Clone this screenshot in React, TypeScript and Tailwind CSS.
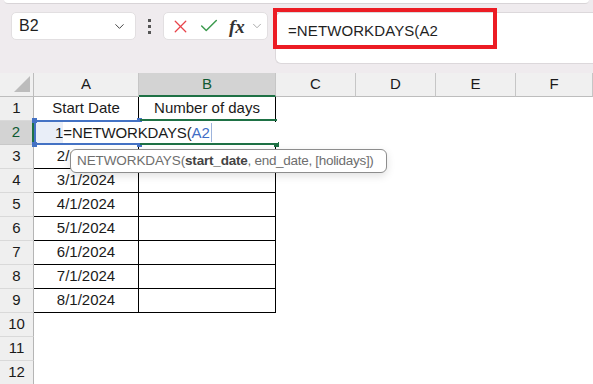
import { X, Check, ChevronDown } from 'lucide-react';

const FONT = { fontFamily: '"Liberation Sans", Arial, sans-serif' };

const columns = ['A', 'B', 'C', 'D', 'E', 'F'];

const data: Record<number, [string, string]> = {
  1: ['Start Date', 'Number of days'],
  2: ['', ''],
  3: ['2/1/2024', ''],
  4: ['3/1/2024', ''],
  5: ['4/1/2024', ''],
  6: ['5/1/2024', ''],
  7: ['6/1/2024', ''],
  8: ['7/1/2024', ''],
  9: ['8/1/2024', ''],
};

function Toolbar() {
  return (
    <div className="relative h-[73px] bg-[#efebee]">
      <div className="mx-[4px] h-[4px] rounded-b-[4px] border-b border-[#d8d4d7] bg-white" />
      <div className="mt-[8px] flex items-start pl-[11px]">
        {/* name box */}
        <div className="flex h-[28px] w-[125px] items-center justify-between rounded-[5px] border border-[#e2dfe1] bg-white pl-[7px] pr-[8px]">
          <span className="text-[16px] text-[#1f1f1f]">B2</span>
          <ChevronDown size={15} strokeWidth={1.6} className="text-[#444]" />
        </div>
        <div className="flex h-[28px] w-[27px] flex-col items-center justify-center gap-[3px]">
          <span className="h-[3px] w-[3px] bg-[#555]" />
          <span className="h-[3px] w-[3px] bg-[#555]" />
          <span className="h-[3px] w-[3px] bg-[#555]" />
        </div>
        {/* cancel / enter / fx */}
        <div className="flex h-[28px] w-[105px] items-center rounded-[5px] border border-[#e2dfe1] bg-white pl-[6px]">
          <X size={21} strokeWidth={1.5} className="text-[#e8434a]" />
          <Check size={22} strokeWidth={1.6} className="ml-[7px] text-[#3c9a4e]" />
          <span
            className="ml-[9px] text-[19px] font-bold italic leading-none text-[#333]"
            style={{ fontFamily: '"Liberation Serif", "Times New Roman", serif' }}
          >
            fx
          </span>
          <ChevronDown size={14} strokeWidth={1.4} className="ml-[5px] text-[#999]" />
        </div>
        {/* formula bar */}
        <div className="ml-[7px] h-[52px] flex-1 rounded-l-[6px] border border-r-0 border-[#dcd8db] bg-white pl-[12px] pt-[6px]">
          <span className="text-[15px] tracking-[0.1px] text-[#1f1f1f]">=NETWORKDAYS(A2</span>
        </div>
      </div>
      {/* annotation */}
      <div className="absolute left-[273px] top-[8px] h-[41px] w-[224px] border-[4px] border-[#ec1c24]" />
    </div>
  );
}

function Sheet() {
  const rows = Array.from({ length: 12 }, (_, i) => i + 1);
  return (
    <div className="relative">
      <div className="grid auto-rows-[24px] grid-cols-[34px_105px_137px_80px_80px_80px_1fr] text-[15px] text-[#1a1a1a]">
        {/* header row */}
        <div className="relative border-b border-r border-[#bdbdbd] bg-[#f0f0f0]">
          <div className="absolute bottom-[4px] right-[3px] h-0 w-0 border-b-[16px] border-l-[16px] border-b-[#bcbcbc] border-l-transparent" />
        </div>
        {columns.map((c) =>
          c === 'B' ? (
            <div
              key={c}
              className="flex items-center justify-center border-b-2 border-r border-b-[#1e7145] border-r-[#c6c6c6] bg-[#d3d3d3] text-[#0f5a32]"
            >
              {c}
            </div>
          ) : (
            <div
              key={c}
              className="flex items-center justify-center border-b border-r border-b-[#bdbdbd] border-r-[#c6c6c6] bg-[#f0f0f0]"
            >
              {c}
            </div>
          ),
        )}
        {rows.map((r) => {
          const inTable = r <= 9;
          const [a, b] = data[r] ?? ['', ''];
          const active = r === 2;
          return [
            <div
              key={`h${r}`}
              className={
                active
                  ? 'flex items-center justify-center border-b border-r-2 border-b-[#c8c8c8] border-r-[#1e7145] bg-[#d3d3d3] text-[#0f5a32]'
                  : 'flex items-center justify-center border-b border-r border-b-[#d9d9d9] border-r-[#b5b5b5] bg-[#efefef]'
              }
            >
              {r}
            </div>,
            <div
              key={`a${r}`}
              className={
                inTable
                  ? 'flex items-center justify-center border-b border-r border-black bg-white'
                  : 'bg-white'
              }
            >
              {a}
            </div>,
            <div
              key={`b${r}`}
              className={
                inTable
                  ? 'flex items-center justify-center border-b border-r border-black bg-white'
                  : 'bg-white'
              }
            >
              {b}
            </div>,
            <div key={`c${r}`} className="bg-white" />,
            <div key={`d${r}`} className="bg-white" />,
            <div key={`e${r}`} className="bg-white" />,
            <div key={`f${r}`} className="bg-white" />,
          ];
        })}
      </div>

      {/* A2 reference highlight */}
      <div className="absolute left-[34px] top-[47px] h-[25px] w-[106px] border-2 border-[#4472c4] bg-[#e9eef8]" />
      <div className="absolute left-[32px] top-[45px] h-[5px] w-[5px] bg-[#4472c4]" />
      <div className="absolute left-[137px] top-[45px] h-[5px] w-[5px] bg-[#4472c4]" />
      <div className="absolute left-[32px] top-[69px] h-[5px] w-[5px] bg-[#4472c4]" />
      <div className="absolute left-[137px] top-[69px] h-[5px] w-[5px] bg-[#4472c4]" />

      {/* B2 active cell (top + bottom edges) */}
      <div className="absolute left-[140px] top-[46px] h-[2px] w-[137px] bg-[#1e7145]" />
      <div className="absolute left-[140px] top-[70px] h-[2px] w-[135px] bg-[#1e7145]" />
      <div className="absolute left-[274px] top-[69px] h-[5px] w-[5px] bg-[#1e7145]" />

      {/* in-cell editor */}
      <div className="absolute left-[55px] top-[49px] flex h-[21px] items-center whitespace-nowrap leading-none">
        <span className="text-[15px] text-[#1a1a1a]">1</span>
        <span className="flex h-[21px] w-[215px] items-center bg-white text-[15px]">
          <span className="tracking-[-0.15px] text-[#1a1a1a]">=NETWORKDAYS(</span>
          <span className="tracking-[-0.15px] text-[#3f6ec6]">A2</span>
          <span className="ml-[1px] h-[19px] w-[1px] bg-[#9db4dc]" />
        </span>
      </div>

      {/* function tooltip */}
      <div className="absolute left-[70px] top-[76px] flex h-[24px] w-[317px] items-center whitespace-nowrap rounded-[6px] border border-[#8d8d8d] bg-white pl-[6px] text-[13.5px] text-[#6e6e6e] shadow-[0_3px_8px_rgba(0,0,0,0.12)]">
        <span className="tracking-[-0.1px]">NETWORKDAYS(</span>
        <span className="font-bold tracking-[-0.2px] text-[#444]">start_date</span>
        <span className="tracking-[-0.3px]">, end_date, [holidays])</span>
      </div>
    </div>
  );
}

export default function App() {
  return (
    <div className="h-[384px] w-[593px] overflow-hidden bg-white" style={FONT}>
      <Toolbar />
      <Sheet />
    </div>
  );
}
